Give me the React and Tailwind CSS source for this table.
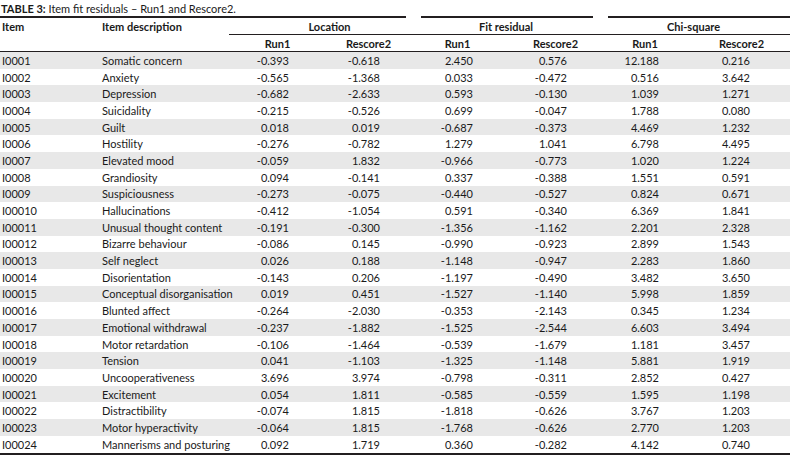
// Table 3: item fit residuals, Run1 vs Rescore2.

const rows = [
  ['I0001', 'Somatic concern', '-0.393', '-0.618', '2.450', '0.576', '12.188', '0.216'],
  ['I0002', 'Anxiety', '-0.565', '-1.368', '0.033', '-0.472', '0.516', '3.642'],
  ['I0003', 'Depression', '-0.682', '-2.633', '0.593', '-0.130', '1.039', '1.271'],
  ['I0004', 'Suicidality', '-0.215', '-0.526', '0.699', '-0.047', '1.788', '0.080'],
  ['I0005', 'Guilt', '0.018', '0.019', '-0.687', '-0.373', '4.469', '1.232'],
  ['I0006', 'Hostility', '-0.276', '-0.782', '1.279', '1.041', '6.798', '4.495'],
  ['I0007', 'Elevated mood', '-0.059', '1.832', '-0.966', '-0.773', '1.020', '1.224'],
  ['I0008', 'Grandiosity', '0.094', '-0.141', '0.337', '-0.388', '1.551', '0.591'],
  ['I0009', 'Suspiciousness', '-0.273', '-0.075', '-0.440', '-0.527', '0.824', '0.671'],
  ['I00010', 'Hallucinations', '-0.412', '-1.054', '0.591', '-0.340', '6.369', '1.841'],
  ['I00011', 'Unusual thought content', '-0.191', '-0.300', '-1.356', '-1.162', '2.201', '2.328'],
  ['I00012', 'Bizarre behaviour', '-0.086', '0.145', '-0.990', '-0.923', '2.899', '1.543'],
  ['I00013', 'Self neglect', '0.026', '0.188', '-1.148', '-0.947', '2.283', '1.860'],
  ['I00014', 'Disorientation', '-0.143', '0.206', '-1.197', '-0.490', '3.482', '3.650'],
  ['I00015', 'Conceptual disorganisation', '0.019', '0.451', '-1.527', '-1.140', '5.998', '1.859'],
  ['I00016', 'Blunted affect', '-0.264', '-2.030', '-0.353', '-2.143', '0.345', '1.234'],
  ['I00017', 'Emotional withdrawal', '-0.237', '-1.882', '-1.525', '-2.544', '6.603', '3.494'],
  ['I00018', 'Motor retardation', '-0.106', '-1.464', '-0.539', '-1.679', '1.181', '3.457'],
  ['I00019', 'Tension', '0.041', '-1.103', '-1.325', '-1.148', '5.881', '1.919'],
  ['I00020', 'Uncooperativeness', '3.696', '3.974', '-0.798', '-0.311', '2.852', '0.427'],
  ['I00021', 'Excitement', '0.054', '1.811', '-0.585', '-0.559', '1.595', '1.198'],
  ['I00022', 'Distractibility', '-0.074', '1.815', '-1.818', '-0.626', '3.767', '1.203'],
  ['I00023', 'Motor hyperactivity', '-0.064', '1.815', '-1.768', '-0.626', '2.770', '1.203'],
  ['I00024', 'Mannerisms and posturing', '0.092', '1.719', '0.360', '-0.282', '4.142', '0.740'],
]

const cols = 'grid grid-cols-[100px_129px_93px_93px_91px_91px_96px_97px]'
// right padding per numeric column so values line up like the print layout
const valuePad = ['pr-[33px]', 'pr-[35px]', 'pr-[33px]', 'pr-[30px]', 'pr-[34px]', 'pr-[40px]']

export default function App() {
  return (
    <div
      className="w-[790px] h-[462px] bg-white text-[#1a1a1a] text-[11px] leading-none whitespace-nowrap"
      style={{ fontFamily: 'Lato, "Open Sans", sans-serif' }}
    >
      <div className="h-[16px] pl-[1px] pt-[3px]">
        <span className="font-bold">TABLE 3:</span> Item fit residuals – Run1 and Rescore2.
      </div>

      <div className="flex h-[2px]">
        <div className="w-[406px] bg-[#231f20]" />
        <div className="ml-[15px] w-[172px] bg-[#231f20]" />
        <div className="ml-[15px] flex-1 bg-[#231f20]" />
      </div>

      <div className={`${cols} h-[16px] items-center font-bold`}>
        <div className="pl-[2px]">Item</div>
        <div className="pl-[2px]">Item description</div>
        <div className="col-span-2 text-center pl-[15px]">Location</div>
        <div className="col-span-2 text-center">Fit residual</div>
        <div className="col-span-2 text-center">Chi-square</div>
      </div>
      <div className="ml-[229px] h-px bg-[#231f20]" />

      <div className={`${cols} h-[16px] items-center font-bold`}>
        <div />
        <div />
        <div className="text-center pl-[4px]">Run1</div>
        <div className="text-center">Rescore2</div>
        <div className="text-center pr-[6px]">Run1</div>
        <div className="text-center pl-[8px]">Rescore2</div>
        <div className="text-center">Run1</div>
        <div className="text-center">Rescore2</div>
      </div>
      <div className="h-px bg-[#231f20]" />

      {rows.map((r, i) => (
        <div
          key={r[0]}
          className={`${cols} h-[16.7px] items-center ${i % 2 === 0 ? 'bg-[#e8e8e8]' : 'bg-white'}`}
        >
          <div className="pl-[2px]">{r[0]}</div>
          <div className="pl-[2px]">{r[1]}</div>
          {r.slice(2).map((v, j) => (
            <div key={j} className={`text-right ${valuePad[j]}`}>
              {v}
            </div>
          ))}
        </div>
      ))}

      <div className="h-[2px] bg-[#231f20]" />
    </div>
  )
}
